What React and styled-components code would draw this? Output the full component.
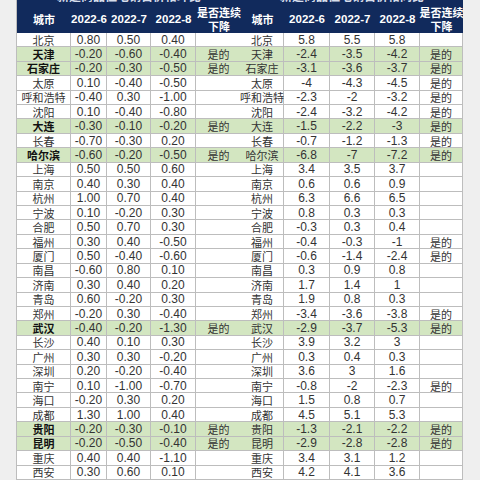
import React from "react";
import styled, { createGlobalStyle } from "styled-components";

const Global = createGlobalStyle`
  html, body { margin: 0; padding: 0; background: #efefef; overflow: hidden; }
  body { font-family: "Liberation Sans", "Noto Sans CJK SC", sans-serif; }
`;

const NAVY = "#112a5c";
const GREEN = "#d3e6c1";
const LINE = "#bdbdbd";

const Page = styled.div`
  display: flex;
  padding-left: 16px;
  width: 480px;
  height: 480px;
  box-sizing: border-box;
  overflow: hidden;
  background: #efefef;
`;

const Panel = styled.div`
  width: ${(p) => p.$width}px;
  flex: none;
  display: flex;
  flex-direction: column;
  border-left: ${(p) => (p.$first ? `1px solid ${LINE}` : "none")};
  box-sizing: border-box;
`;

const Title = styled.div`
  height: 5px;
  overflow: hidden;
  background: ${NAVY};
  color: #d5dcea;
  font-family: "Noto Sans CJK SC", sans-serif;
  font-weight: 700;
  font-size: 12px;
  text-align: center;
  span {
    display: block;
    line-height: 14px;
    margin-top: -11px;
  }
`;

const Row = styled.div`
  display: grid;
  grid-template-columns: ${(p) => p.$cols};
  height: ${(p) => p.$h}px;
  box-sizing: border-box;
`;

const HeadCell = styled.div`
  background: ${NAVY};
  color: #fff;
  font-weight: 700;
  display: flex;
  flex-direction: column;
  align-items: center;
  justify-content: center;
  font-size: ${(p) => (p.$cjk ? "11px" : "11.5px")};
  font-family: ${(p) =>
    p.$cjk ? '"Noto Sans CJK SC", sans-serif' : '"Liberation Sans", "Noto Sans CJK SC", sans-serif'};
  line-height: 14px;
  white-space: nowrap;
`;

const Cell = styled.div`
  background: ${(p) => (p.$green ? GREEN : "#fff")};
  border-right: 1px solid ${LINE};
  border-bottom: 1px solid ${LINE};
  box-sizing: border-box;
  display: flex;
  align-items: center;
  justify-content: center;
  white-space: nowrap;
  color: ${(p) => (p.$bold ? "#111" : "#333")};
  font-weight: ${(p) => (p.$bold ? 700 : 400)};
  font-size: ${(p) => (p.$kind === "num" ? "12px" : "11px")};
  font-family: ${(p) =>
    p.$kind === "num"
      ? '"Liberation Sans", "Noto Sans CJK SC", sans-serif'
      : '"Noto Sans CJK SC", sans-serif'};
  line-height: 12px;
`;

const leftData = [
  ["北京", "0.80", "0.50", "0.40", ""],
  ["天津", "-0.20", "-0.60", "-0.40", "是的"],
  ["石家庄", "-0.20", "-0.30", "-0.50", "是的"],
  ["太原", "0.10", "-0.40", "-0.50", ""],
  ["呼和浩特", "-0.40", "0.30", "-1.00", ""],
  ["沈阳", "0.10", "-0.40", "-0.80", ""],
  ["大连", "-0.30", "-0.10", "-0.20", "是的"],
  ["长春", "-0.70", "-0.30", "0.20", ""],
  ["哈尔滨", "-0.60", "-0.20", "-0.50", "是的"],
  ["上海", "0.50", "0.50", "0.60", ""],
  ["南京", "0.40", "0.30", "0.40", ""],
  ["杭州", "1.00", "0.70", "0.40", ""],
  ["宁波", "0.10", "-0.20", "0.30", ""],
  ["合肥", "0.50", "0.70", "0.30", ""],
  ["福州", "0.30", "0.40", "-0.50", ""],
  ["厦门", "0.50", "-0.40", "-0.60", ""],
  ["南昌", "-0.60", "0.80", "0.10", ""],
  ["济南", "0.30", "0.40", "0.20", ""],
  ["青岛", "0.60", "-0.20", "0.30", ""],
  ["郑州", "-0.20", "0.30", "-0.40", ""],
  ["武汉", "-0.40", "-0.20", "-1.30", "是的"],
  ["长沙", "0.40", "0.10", "0.30", ""],
  ["广州", "0.30", "0.30", "-0.20", ""],
  ["深圳", "0.20", "-0.20", "-0.40", ""],
  ["南宁", "0.10", "-1.00", "-0.70", ""],
  ["海口", "-0.20", "0.30", "0.20", ""],
  ["成都", "1.30", "1.00", "0.40", ""],
  ["贵阳", "-0.20", "-0.30", "-0.10", "是的"],
  ["昆明", "-0.20", "-0.50", "-0.40", "是的"],
  ["重庆", "0.40", "0.40", "-1.10", ""],
  ["西安", "0.30", "0.60", "0.10", ""],
];

const rightData = [
  ["北京", "5.8", "5.5", "5.8", ""],
  ["天津", "-2.4", "-3.5", "-4.2", "是的"],
  ["石家庄", "-3.1", "-3.6", "-3.7", "是的"],
  ["太原", "-4", "-4.3", "-4.5", "是的"],
  ["呼和浩特", "-2.3", "-2", "-3.2", "是的"],
  ["沈阳", "-2.4", "-3.2", "-4.2", "是的"],
  ["大连", "-1.5", "-2.2", "-3", "是的"],
  ["长春", "-0.7", "-1.2", "-1.3", "是的"],
  ["哈尔滨", "-6.8", "-7", "-7.2", "是的"],
  ["上海", "3.4", "3.5", "3.7", ""],
  ["南京", "0.6", "0.6", "0.9", ""],
  ["杭州", "6.3", "6.6", "6.5", ""],
  ["宁波", "0.8", "0.3", "0.3", ""],
  ["合肥", "-0.3", "0.3", "0.4", ""],
  ["福州", "-0.4", "-0.3", "-1", "是的"],
  ["厦门", "-0.6", "-1.4", "-2.4", "是的"],
  ["南昌", "0.3", "0.9", "0.8", ""],
  ["济南", "1.7", "1.4", "1", ""],
  ["青岛", "1.9", "0.8", "0.3", ""],
  ["郑州", "-3.4", "-3.6", "-3.8", "是的"],
  ["武汉", "-2.9", "-3.7", "-5.3", "是的"],
  ["长沙", "3.9", "3.2", "3", ""],
  ["广州", "0.3", "0.4", "0.3", ""],
  ["深圳", "3.6", "3", "1.6", ""],
  ["南宁", "-0.8", "-2", "-2.3", "是的"],
  ["海口", "1.5", "0.8", "0.7", ""],
  ["成都", "4.5", "5.1", "5.3", ""],
  ["贵阳", "-1.3", "-2.1", "-2.2", "是的"],
  ["昆明", "-2.9", "-2.8", "-2.8", "是的"],
  ["重庆", "3.4", "3.1", "1.2", ""],
  ["西安", "4.2", "4.1", "3.6", ""],
];

const greenCities = new Set(["天津", "石家庄", "大连", "哈尔滨", "武汉", "贵阳", "昆明"]);

function Table({ title, data, cols, width, first, boldCity }) {
  return (
    <Panel $width={width} $first={first}>
      <Title>
        <span>{title}</span>
      </Title>
      <Row $cols={cols} $h={28}>
        <HeadCell $cjk>城市</HeadCell>
        <HeadCell>2022-6</HeadCell>
        <HeadCell>2022-7</HeadCell>
        <HeadCell>2022-8</HeadCell>
        <HeadCell $cjk>
          <span>是否连续</span>
          <span>下降</span>
        </HeadCell>
      </Row>
      {data.map((r) => {
        const g = greenCities.has(r[0]);
        return (
          <Row key={r[0]} $cols={cols} $h={14.67}>
            <Cell $green={g} $bold={g && boldCity} $kind="city">
              {r[0]}
            </Cell>
            <Cell $green={g} $kind="num">{r[1]}</Cell>
            <Cell $green={g} $kind="num">{r[2]}</Cell>
            <Cell $green={g} $kind="num">{r[3]}</Cell>
            <Cell $green={g} $kind="flag">{r[4]}</Cell>
          </Row>
        );
      })}
    </Panel>
  );
}

export default function App() {
  return (
    <>
      <Global />
      <Page>
        <Table
          title="新建商品住宅销售价格环比"
          data={leftData}
          cols="54px 36px 44px 45px 46px"
          width={225}
          first
          boldCity
        />
        <Table
          title="新建商品住宅销售价格同比"
          data={rightData}
          cols="43px 46px 45px 45px 43px"
          width={222}
        />
      </Page>
    </>
  );
}
